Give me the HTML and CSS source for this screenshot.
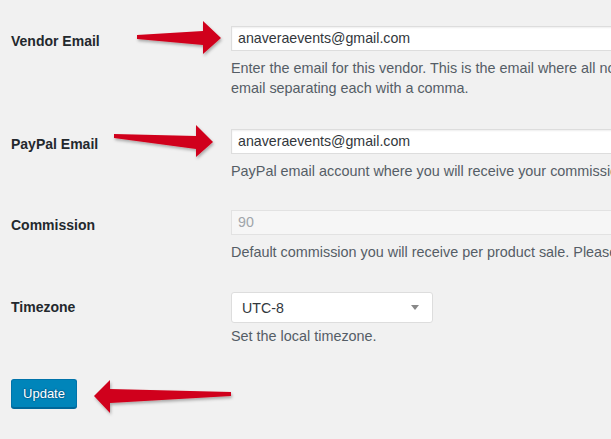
FILE: index.html
```html
<!DOCTYPE html>
<html>
<head>
<meta charset="utf-8">
<link rel="stylesheet" href="styles.css">
</head>
<body>
<div class="page">
  <form class="form">
    <div class="row">
      <div class="label">Vendor Email</div>
      <div class="field">
        <div class="input">anaveraevents@gmail.com</div>
        <p class="desc">Enter the email for this vendor. This is the email where all notifications will be sent. You can add multiple<br>email separating each with a comma.</p>
      </div>
    </div>
    <div class="row second">
      <div class="label">PayPal Email</div>
      <div class="field">
        <div class="input">anaveraevents@gmail.com</div>
        <p class="desc">PayPal email account where you will receive your commission payouts.</p>
      </div>
    </div>
    <div class="row">
      <div class="label">Commission</div>
      <div class="field">
        <div class="input disabled">90</div>
        <p class="desc">Default commission you will receive per product sale. Please contact the site owner.</p>
      </div>
    </div>
    <div class="row">
      <div class="label">Timezone</div>
      <div class="field">
        <div class="select"><span>UTC-8</span><span class="caret"></span></div>
        <p class="desc tz">Set the local timezone.</p>
      </div>
    </div>
    <div class="actions">
      <span class="button">Update</span>
    </div>
  </form>
  <svg class="arrows" width="611" height="439" viewBox="0 0 611 439">
    <defs>
      <filter id="sh" x="-20%" y="-50%" width="140%" height="200%">
        <feDropShadow dx="1" dy="2" stdDeviation="1.5" flood-color="#000" flood-opacity="0.3"/>
      </filter>
    </defs>
    <g fill="#d0021b" filter="url(#sh)">
      <polygon points="137,35 203,31 203,21 221,38 203,54 203,45 137,39"/>
      <polygon points="114,134 196,136 196,125 213,142 196,157 196,149 114,138"/>
      <polygon points="94,396 110,380 110,389 231,392 231,396 110,403 110,413"/>
    </g>
  </svg>
</div>
</body>
</html>
```
FILE: styles.css
```css
html, body {
  margin: 0;
  padding: 0;
  background: #f1f1f1;
  overflow: hidden;
}
.page {
  position: relative;
  width: 611px;
  height: 439px;
  overflow: hidden;
  font-family: "Liberation Sans", Arial, sans-serif;
  font-size: 14px;
  color: #444;
}
.form {
  padding: 26px 0 0 11px;
  display: flex;
  flex-direction: column;
  gap: 30px;
}
.row {
  display: flex;
}
.row.second {
  margin-top: 1px;
  margin-bottom: -1px;
}
.label {
  width: 220px;
  flex: none;
  padding-top: 5px;
  line-height: 20px;
  font-weight: bold;
  color: #23282d;
}
.field {
  flex: none;
  width: 600px;
}
.input {
  box-sizing: border-box;
  width: 420px;
  height: 25px;
  line-height: 23px;
  padding: 0 6px;
  background: #fff;
  border: 1px solid #ddd;
  box-shadow: inset 0 1px 2px rgba(0,0,0,0.07);
  color: #32373c;
  font-size: 14.2px;
}
.input.disabled {
  background: #f6f6f6;
  border-color: #e2e2e2;
  color: #a0a5aa;
  box-shadow: none;
}
.desc {
  margin: 7px 0 0;
  line-height: 20px;
  font-size: 14.4px;
  color: #555d66;
  white-space: nowrap;
}
.desc.tz {
  margin-top: 3px;
}
.select {
  box-sizing: border-box;
  width: 202px;
  height: 31px;
  padding: 0 10px;
  background: #fff;
  border: 1px solid #ddd;
  border-radius: 3px;
  display: flex;
  align-items: center;
  justify-content: space-between;
  color: #32373c;
  font-size: 14.2px;
}
.caret {
  width: 0;
  height: 0;
  border-left: 4px solid transparent;
  border-right: 4px solid transparent;
  border-top: 5px solid #888;
  margin-right: 3px;
}
.actions {
  display: flex;
  padding-top: 3px;
}
.button {
  box-sizing: border-box;
  height: 29px;
  width: 66px;
  display: flex;
  align-items: center;
  justify-content: center;
  background: #0085ba;
  border: 1px solid #0073aa;
  border-bottom-color: #006799;
  border-radius: 3px;
  box-shadow: 0 1px 0 #006799;
  color: #fff;
  font-size: 13px;
  text-shadow: 0 -1px 1px #006799, 1px 0 1px #006799, 0 1px 1px #006799, -1px 0 1px #006799;
}
.arrows {
  position: absolute;
  left: 0;
  top: 0;
  pointer-events: none;
}
```
